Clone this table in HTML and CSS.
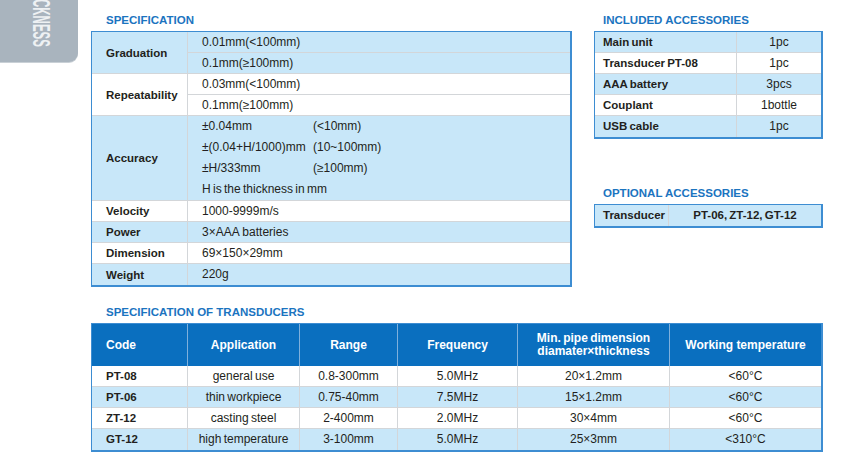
FILE: index.html
```html
<!DOCTYPE html>
<html>
<head>
<meta charset="utf-8">
<link rel="stylesheet" href="styles.css">
</head>
<body>
<div class="page">
  <div class="top">
    <div class="tab"><span class="tab-text">CKNESS</span></div>
    <section class="spec">
      <h2 class="title">SPECIFICATION</h2>
      <div class="spec-table">
        <div class="lab blue span2">Graduation</div>
        <div class="val blue">0.01mm(&lt;100mm)</div>
        <div class="val blue">0.1mm(≥100mm)</div>
        <div class="lab span2">Repeatability</div>
        <div class="val">0.03mm(&lt;100mm)</div>
        <div class="val">0.1mm(≥100mm)</div>
        <div class="lab blue tall">Accuracy</div>
        <div class="val blue acc">
          <span>±0.04mm</span><span>(&lt;10mm)</span>
          <span>±(0.04+H/1000)mm</span><span>(10~100mm)</span>
          <span>±H/333mm</span><span>(≥100mm)</span>
          <span class="full">H is the thickness in mm</span>
        </div>
        <div class="lab">Velocity</div>
        <div class="val">1000-9999m/s</div>
        <div class="lab blue">Power</div>
        <div class="val blue">3×AAA batteries</div>
        <div class="lab">Dimension</div>
        <div class="val">69×150×29mm</div>
        <div class="lab blue last">Weight</div>
        <div class="val blue last">220g</div>
      </div>
    </section>
    <aside class="side">
      <h2 class="title title-side">INCLUDED ACCESSORIES</h2>
      <div class="acc-table">
        <div class="alab blue">Main unit</div><div class="aval blue">1pc</div>
        <div class="alab">Transducer PT-08</div><div class="aval">1pc</div>
        <div class="alab blue">AAA battery</div><div class="aval blue">3pcs</div>
        <div class="alab">Couplant</div><div class="aval">1bottle</div>
        <div class="alab blue last">USB cable</div><div class="aval blue last">1pc</div>
      </div>
      <h2 class="title title-opt">OPTIONAL ACCESSORIES</h2>
      <div class="opt-table">
        <div class="alab blue last">Transducer</div><div class="aval blue last bold">PT-06, ZT-12, GT-12</div>
      </div>
    </aside>
  </div>
  <section class="trans">
    <h2 class="title">SPECIFICATION OF TRANSDUCERS</h2>
    <div class="trans-table">
      <div class="th left">Code</div>
      <div class="th">Application</div>
      <div class="th">Range</div>
      <div class="th">Frequency</div>
      <div class="th two">Min. pipe dimension<br>diamater×thickness</div>
      <div class="th end">Working temperature</div>

      <div class="td code">PT-08</div><div class="td">general use</div><div class="td">0.8-300mm</div><div class="td">5.0MHz</div><div class="td">20×1.2mm</div><div class="td end">&lt;60°C</div>
      <div class="td code blue">PT-06</div><div class="td blue">thin workpiece</div><div class="td blue">0.75-40mm</div><div class="td blue">7.5MHz</div><div class="td blue">15×1.2mm</div><div class="td blue end">&lt;60°C</div>
      <div class="td code">ZT-12</div><div class="td">casting steel</div><div class="td">2-400mm</div><div class="td">2.0MHz</div><div class="td">30×4mm</div><div class="td end">&lt;60°C</div>
      <div class="td code blue last">GT-12</div><div class="td blue last">high temperature</div><div class="td blue last">3-100mm</div><div class="td blue last">5.0MHz</div><div class="td blue last">25×3mm</div><div class="td blue last end">&lt;310°C</div>
    </div>
  </section>
</div>
</body>
</html>
```

FILE: styles.css
```css
* { box-sizing: border-box; margin: 0; padding: 0; }
body {
  margin: 0;
  width: 867px;
  height: 472px;
  background: #fff;
  font-family: "Liberation Sans", Arial, sans-serif;
  color: #231f20;
  overflow: hidden;
}
.page { width: 867px; }
.top { display: flex; align-items: flex-start; }

.tab {
  width: 78px;
  height: 62px;
  background: #a9b4be;
  border-bottom-right-radius: 9px;
  box-shadow: 0 1px 0 #c9d0d6;
  display: flex;
  justify-content: center;
  overflow: hidden;
}
.tab-text {
  writing-mode: vertical-rl;
  font-family: "Liberation Sans Narrow", "Liberation Sans", Arial, sans-serif;
  font-weight: bold;
  font-size: 23px;
  line-height: 18px;
  color: #eef1f3;
  transform: scaleY(0.5);
  transform-origin: top center;
  margin-left: 4px;
  margin-top: -1px;
  height: 76px;
}

.title {
  font-size: 11.5px;
  font-weight: bold;
  color: #1b74bf;
  line-height: 14px;
  padding-top: 13px;
  margin-bottom: 4px;
  padding-left: 15px;
  white-space: nowrap;
}

.blue { background: #c8e7f9; }

.spec { margin-left: 13px; width: 481px; }
.spec-table {
  display: grid;
  grid-template-columns: 96px 1fr;
  border: 1px solid #3d8dd2;
  border-right-width: 2px;
  border-bottom-width: 2px;
}
.lab {
  font-weight: bold;
  font-size: 11.5px;
  height: 21px;
  line-height: 20px;
  padding-left: 14px;
  border-bottom: 1px solid #d3d6d9;
  border-right: 1px solid #d3d6d9;
  display: flex;
  align-items: center;
}
.span2 { grid-row: span 2; height: 42px; }
.lab.tall { height: 85px; }
.val {
  font-size: 12px;
  height: 21px;
  line-height: 20px;
  padding-left: 14px;
  border-bottom: 1px solid #d3d6d9;
  white-space: nowrap;
}
.acc {
  height: 85px;
  line-height: 21px;
  display: grid;
  grid-template-columns: 111px auto;
  align-content: start;
}
.acc .full { grid-column: span 2; word-spacing: -1px; }
.lab.last, .val.last { border-bottom: none; }

.side { margin-left: 22px; width: 229px; }
.title-side { padding-left: 9px; }
.title-opt { padding-left: 9px; padding-top: 47px; }
.acc-table, .opt-table {
  display: grid;
  border: 1px solid #3d8dd2;
  border-right-width: 2px;
  border-bottom-width: 2px;
}
.acc-table { grid-template-columns: 142px 1fr; }
.opt-table { grid-template-columns: 74px 1fr; }
.alab {
  font-weight: bold;
  font-size: 11.5px;
  height: 21px;
  line-height: 20px;
  padding-left: 8px;
  border-bottom: 1px solid #d3d6d9;
  border-right: 1px solid #d3d6d9;
  white-space: nowrap;
  word-spacing: -1px;
}
.aval {
  font-size: 12px;
  height: 21px;
  line-height: 20px;
  text-align: center;
  border-bottom: 1px solid #d3d6d9;
  white-space: nowrap;
}
.aval.bold { font-weight: bold; font-size: 11.5px; word-spacing: -1px; }
.alab.last, .aval.last { border-bottom: none; }

.trans { margin-left: 91px; width: 732px; }
.trans .title { padding-top: 18px; }
.trans-table {
  display: grid;
  grid-template-columns: 96px 112px 98px 120px 152px 1fr;
  border: 1px solid #3d8dd2;
  border-right-width: 2px;
  border-bottom-width: 2px;
}
.th {
  background: #0a6fbf;
  color: #fff;
  font-weight: bold;
  font-size: 12px;
  height: 42px;
  display: flex;
  align-items: center;
  justify-content: center;
  text-align: center;
  border-right: 1px solid #7fb0dc;
  line-height: 13px;
  white-space: nowrap;
}
.th.left { justify-content: flex-start; padding-left: 14px; }
.th.two { word-spacing: -1px; }
.th.end, .td.end { border-right: none; }
.td {
  font-size: 12px;
  height: 21px;
  line-height: 20px;
  text-align: center;
  border-bottom: 1px solid #d3d6d9;
  border-right: 1px solid #d3d6d9;
  white-space: nowrap;
  word-spacing: -1px;
}
.td.code { text-align: left; padding-left: 14px; font-weight: bold; font-size: 11.5px; }
.td.last { border-bottom: none; }
```
